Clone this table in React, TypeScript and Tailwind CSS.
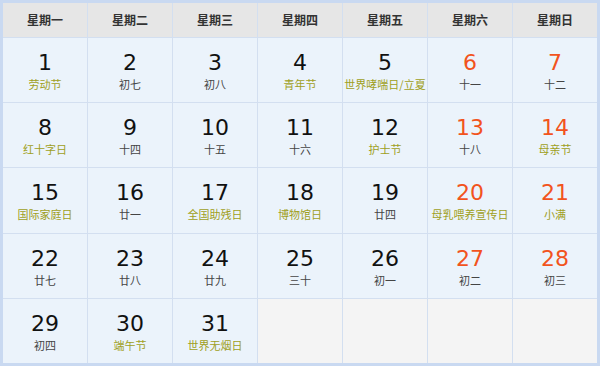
import React from "react";

type Cell = { d?: number; t?: string; f?: boolean; w?: boolean };

const rows: Cell[][] = [
  [
    { d: 1, t: "劳动节", f: true },
    { d: 2, t: "初七" },
    { d: 3, t: "初八" },
    { d: 4, t: "青年节", f: true },
    { d: 5, t: "世界哮喘日/立夏", f: true },
    { d: 6, t: "十一", w: true },
    { d: 7, t: "十二", w: true },
  ],
  [
    { d: 8, t: "红十字日", f: true },
    { d: 9, t: "十四" },
    { d: 10, t: "十五" },
    { d: 11, t: "十六" },
    { d: 12, t: "护士节", f: true },
    { d: 13, t: "十八", w: true },
    { d: 14, t: "母亲节", f: true, w: true },
  ],
  [
    { d: 15, t: "国际家庭日", f: true },
    { d: 16, t: "廿一" },
    { d: 17, t: "全国助残日", f: true },
    { d: 18, t: "博物馆日", f: true },
    { d: 19, t: "廿四" },
    { d: 20, t: "母乳喂养宣传日", f: true, w: true },
    { d: 21, t: "小满", f: true, w: true },
  ],
  [
    { d: 22, t: "廿七" },
    { d: 23, t: "廿八" },
    { d: 24, t: "廿九" },
    { d: 25, t: "三十" },
    { d: 26, t: "初一" },
    { d: 27, t: "初二", w: true },
    { d: 28, t: "初三", w: true },
  ],
  [
    { d: 29, t: "初四" },
    { d: 30, t: "端午节", f: true },
    { d: 31, t: "世界无烟日", f: true },
    {},
    {},
    {},
    {},
  ],
];

const heads = ["星期一", "星期二", "星期三", "星期四", "星期五", "星期六", "星期日"];

export default function App() {
  return (
    <div className="w-[600px] h-[366px] bg-[#c9d9f1] p-[3px]">
      <div
        className="grid h-[360px] w-[594px] grid-cols-7 grid-rows-[34px_repeat(5,1fr)] gap-px bg-[#d3dff0]"
        style={{ fontFamily: '"Noto Sans CJK SC", sans-serif' }}
      >
        {heads.map((h) => (
          <div
            key={h}
            className="flex items-center justify-center bg-[#e6e6e6] text-[12px] font-bold text-[#333]"
          >
            {h}
          </div>
        ))}
        {rows.flat().map((c, i) =>
          c.d ? (
            <div
              key={i}
              className="flex flex-col items-center justify-center bg-[#ebf3fb] pt-[1px]"
            >
              <div
                className={`text-[22px] leading-[26px] ${c.w ? "text-[#f2531d]" : "text-[#111]"}`}
                style={{ fontFamily: '"DejaVu Sans", sans-serif' }}
              >
                {c.d}
              </div>
              <div
                className={`mt-[1px] text-[11px] leading-[14px] whitespace-nowrap ${c.f ? "text-[#9f9f1c]" : "text-[#444]"}`}
              >
                {c.t}
              </div>
            </div>
          ) : (
            <div key={i} className="bg-[#f4f4f4]" />
          )
        )}
      </div>
    </div>
  );
}
